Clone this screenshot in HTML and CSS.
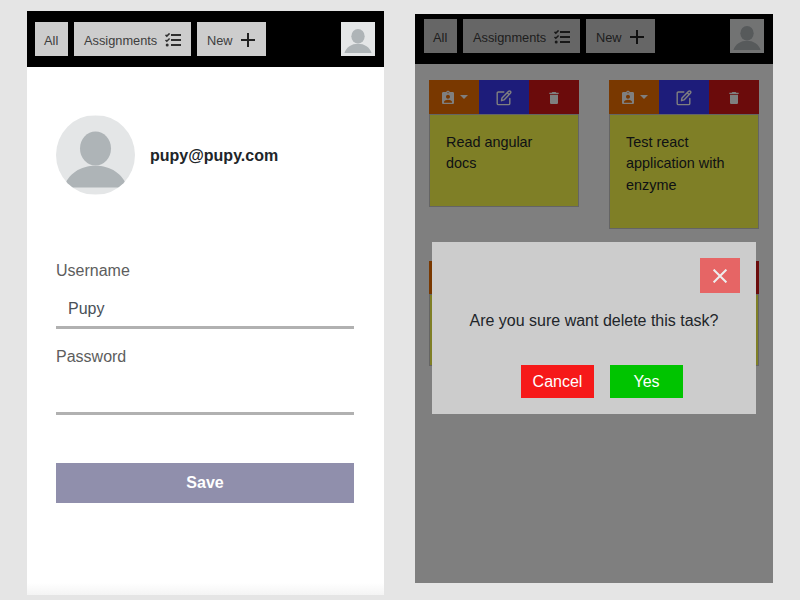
FILE: index.html
```html
<!DOCTYPE html>
<html lang="en">
<head>
<meta charset="utf-8">
<title>Tasks</title>
<link rel="stylesheet" href="styles.css">
</head>
<body>
<svg width="0" height="0" class="sprite" aria-hidden="true">
  <symbol id="tasks" viewBox="0 0 16 14"><path d="M6 2h10M6 7h10M6 12h10" stroke="currentColor" stroke-width="2" fill="none"/><path d="M.5 1.900l1.300 1.200L4.600.4M.5 7l1.300 1.200L4.600 5.500" stroke="currentColor" stroke-width="1.500" fill="none"/><circle cx="2.200" cy="12.100" r="1.500" fill="currentColor"/></symbol>
  <symbol id="plus" viewBox="0 0 14 14"><path d="M7 0v14M0 7h14" stroke="currentColor" stroke-width="2" fill="none"/></symbol>
  <symbol id="person" viewBox="0 0 80 80"><rect width="80" height="80" fill="#e4e6e7"/><ellipse cx="40" cy="33.500" rx="15.700" ry="17.200" fill="#aeb4b7"/><path d="M8 73C12 59 25 51 40 51s28 8 32 22z" fill="#aeb4b7"/></symbol>
  <symbol id="assign" viewBox="0 0 24 24"><path fill="currentColor" d="M19 3h-4.180C14.400 1.840 13.300 1 12 1S9.600 1.840 9.180 3H5c-1.100 0-2 .9-2 2v14c0 1.100.9 2 2 2h14c1.100 0 2-.9 2-2V5c0-1.100-.9-2-2-2zm-7 0c.55 0 1 .45 1 1s-.45 1-1 1-1-.45-1-1 .45-1 1-1zm0 4c1.660 0 3 1.340 3 3s-1.340 3-3 3-3-1.340-3-3 1.340-3 3-3zm6 12H6v-1.400c0-2 4-3.100 6-3.100s6 1.100 6 3.100V19z"/></symbol>
  <symbol id="edit" viewBox="0 0 16 16"><path fill="none" stroke="currentColor" stroke-width="1.400" stroke-linejoin="round" stroke-linecap="round" d="M7.800 2H2.400Q1.200 2 1.200 3.200v10.200q0 1.200 1.200 1.200h10.200q1.200 0 1.200-1.200V8.500M5.500 10.700l.5-2.800 6.600-6.600q.9-.8 1.800 0 .9 1 0 1.900L8 9.900zM11.200 2.700l1.800 1.800"/></symbol>
  <symbol id="trash" viewBox="0 0 24 24"><path fill="currentColor" d="M6 19c0 1.100.9 2 2 2h8c1.100 0 2-.9 2-2V7H6v12zM19 4h-3.500l-1-1h-5l-1 1H5v2h14V4z"/></symbol>
</svg>
<main class="board">
  <section class="screen profile">
    <nav class="nav">
      <button class="tab all">All</button>
      <button class="tab assignments">Assignments<svg class="tasks"><use href="#tasks"/></svg></button>
      <button class="tab new">New<svg class="plus"><use href="#plus"/></svg></button>
      <svg class="thumb"><use href="#person"/></svg>
    </nav>
    <div class="content">
      <div class="user"><svg class="avatar" preserveAspectRatio="none"><use href="#person"/></svg><strong>pupy@pupy.com</strong></div>
      <form>
        <label for="name">Username</label>
        <input id="name" type="text" value="Pupy">
        <label for="pass">Password</label>
        <input id="pass" type="password">
        <button class="save" type="button">Save</button>
      </form>
    </div>
  </section>
  <section class="screen list">
    <nav class="nav">
      <button class="tab all">All</button>
      <button class="tab assignments">Assignments<svg class="tasks"><use href="#tasks"/></svg></button>
      <button class="tab new">New<svg class="plus"><use href="#plus"/></svg></button>
      <svg class="thumb"><use href="#person"/></svg>
    </nav>
    <div class="cards">
      <article class="card">
        <div class="tools"><span class="tool orange"><svg class="assign"><use href="#assign"/></svg><i class="caret"></i></span><span class="tool blue"><svg class="edit"><use href="#edit"/></svg></span><span class="tool red"><svg class="trash"><use href="#trash"/></svg></span></div>
        <p>Read angular docs</p>
      </article>
      <article class="card">
        <div class="tools"><span class="tool orange"><svg class="assign"><use href="#assign"/></svg><i class="caret"></i></span><span class="tool blue"><svg class="edit"><use href="#edit"/></svg></span><span class="tool red"><svg class="trash"><use href="#trash"/></svg></span></div>
        <p>Test react application with enzyme</p>
      </article>
      <article class="card short"><div class="tools"><span class="tool orange"></span><span class="tool blue"></span><span class="tool red"></span></div><p></p></article>
      <article class="card short"><div class="tools"><span class="tool orange"></span><span class="tool blue"></span><span class="tool red"></span></div><p></p></article>
    </div>
    <div class="overlay">
      <div class="dialog">
        <button class="close" aria-label="Close"><svg viewBox="0 0 14 14"><path d="M.6.600l12.800 12.800M13.400.600L.6 13.400" stroke="currentColor" stroke-width="2" fill="none"/></svg></button>
        <p>Are you sure want delete this task?</p>
        <div class="actions"><button class="cancel">Cancel</button><button class="yes">Yes</button></div>
      </div>
    </div>
  </section>
</main>
</body>
</html>
```

FILE: styles.css
```css
* { box-sizing: border-box; }
body {
  margin: 0;
  height: 600px;
  overflow: hidden;
  background: #e5e5e5;
  color: #212529;
  font: 16px/24px "Liberation Sans", Arial, sans-serif;
}
button, input { font: inherit; border: 0; border-radius: 0; margin: 0; padding: 0; }
svg { display: block; flex: none; }
p { margin: 0; }
.sprite { position: absolute; }
.board { display: flex; align-items: flex-start; gap: 31px; padding: 11px 27px 0; }
.screen { flex: none; }
.profile {
  width: 357px;
  height: 584px;
  background: linear-gradient(#fff 0, #fff 572px, #f4f4f4 584px);
}
.list { position: relative; width: 358px; height: 569px; margin-top: 3px; background: #fff; }

.nav { display: flex; align-items: flex-start; gap: 6px; height: 56px; padding: 11px 9px 0 8px; background: #000; }
.list .nav { height: 50px; padding: 5px 9px 0; }
.tab {
  display: flex;
  align-items: center;
  height: 34px;
  padding: 3px 0 0 10px;
  background: #cdcdcd;
  color: #3d3d3d;
  font-size: 12.8px;
  line-height: 20px;
}
.all { width: 33px; padding-left: 9px; }
.assignments { width: 117px; }
.new { width: 69px; }
.tasks { width: 16px; height: 14px; margin: -2px 0 0 8px; color: #303030; }
.plus { width: 14px; height: 14px; margin: -2px 0 0 8.600px; color: #222; }
.thumb { width: 34px; height: 34px; margin-left: auto; }

.content { padding: 48px 30px 0 29px; }
.user { display: flex; align-items: center; gap: 15px; height: 80px; }
.user strong { padding-top: 2px; }
.avatar { width: 79px; height: 80px; border-radius: 50%; }
form { display: flex; flex-direction: column; margin-top: 64px; }
label { height: 24px; color: #5d5d5d; }
input {
  width: 298px;
  height: 41px;
  margin: 5px 0 16px;
  padding: 3px 12px 0;
  border-bottom: 3px solid #b1b1b1;
  background: transparent;
  color: #495057;
}
.save { height: 40px; margin-top: 32px; background: #908fac; color: #fff; font-weight: bold; }

.cards { display: grid; grid-template-columns: 150px 150px; gap: 32px 30px; align-items: start; padding: 16px 14px; }
.tools { display: flex; height: 34px; }
.short .tools { height: 33px; }
.tool { display: flex; flex: 1; align-items: center; justify-content: center; color: #fff; }
.orange { background: #f27100; }
.blue { background: #3b38f4; }
.red { background: #d61616; }
.assign { width: 16px; height: 16px; margin-top: 2px; }
.caret { margin-left: 4px; border: 4px solid transparent; border-top-color: #fff; border-bottom: 0; }
.edit, .trash { width: 16px; height: 16px; margin-top: 2px; }
.card p { min-height: 72px; padding: 16.500px 16px 31.500px; border: 1px solid #c8c8c8; background: #fefe4c; font-size: 14.400px; line-height: 21.600px; }

.overlay { position: absolute; inset: 0; display: flex; align-items: flex-start; justify-content: center; padding: 228px 0 0 1px; background: rgba(0, 0, 0, .5); }
.dialog { display: flex; flex-direction: column; width: 324px; height: 172px; margin-right: 1px; padding: 16px; background: #ccc; text-align: center; }
.close { display: flex; align-items: center; justify-content: center; align-self: flex-end; width: 40px; height: 35px; background: #e66565; color: #eee; }
.close svg { width: 14px; height: 14px; }
.dialog p { margin-top: 16px; }
.actions { display: flex; justify-content: center; gap: 16px; margin: 32px 0 0 16px; }
.actions button { width: 73px; height: 33px; color: #fff; }
.actions .cancel { background: #f61919; }
.actions .yes { background: #00c400; }
```
